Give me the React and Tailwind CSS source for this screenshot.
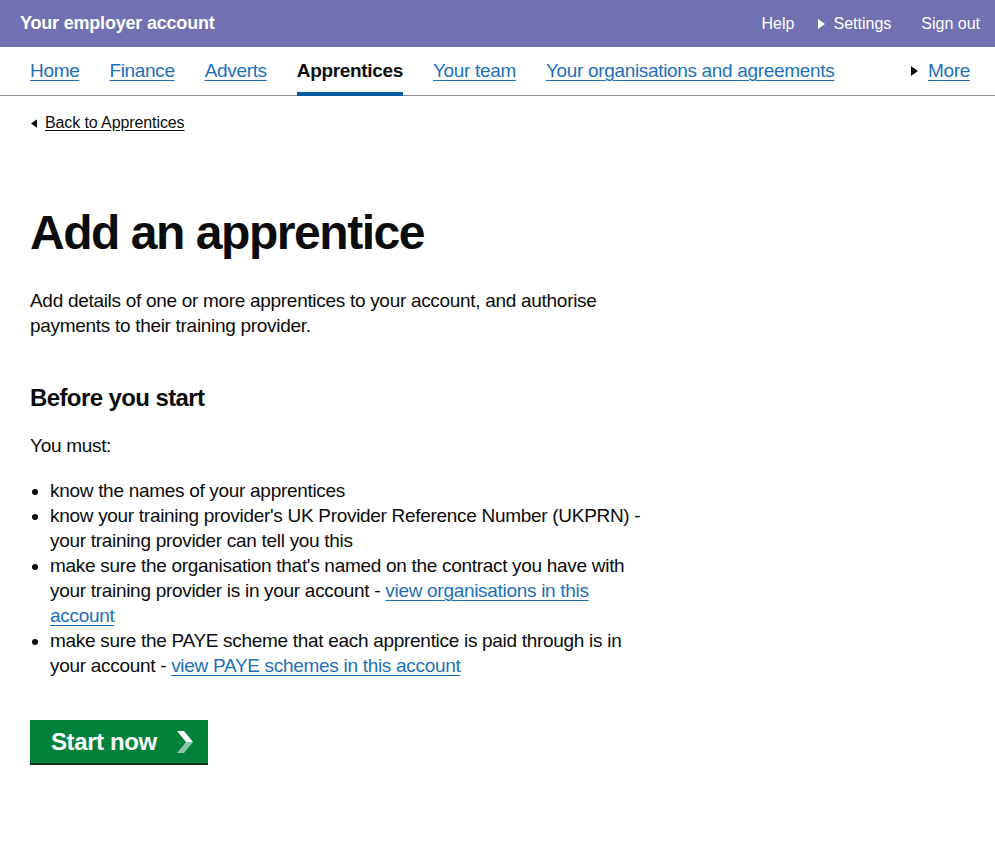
import { useState } from "react";

const FONT = { fontFamily: '"Liberation Sans", Arial, sans-serif' };

const NAV = [
  { label: "Home" },
  { label: "Finance" },
  { label: "Adverts" },
  { label: "Apprentices", current: true },
  { label: "Your team" },
  { label: "Your organisations and agreements" },
];

function Triangle({ dir = "right", className = "" }) {
  // small solid caret used by the settings / more / back links
  const d = dir === "left" ? "M7 0 L7 10 L0 5 Z" : "M0 0 L7 5 L0 10 Z";
  return (
    <svg viewBox="0 0 7 10" className={className} aria-hidden="true">
      <path d={d} fill="currentColor" />
    </svg>
  );
}

function Chevron() {
  return (
    <svg viewBox="0 0 16 22" className="w-[16px] h-[22px]" aria-hidden="true">
      <path d="M0 0 H7 L16 11 H9 Z" fill="#ffffff" />
      <path d="M9 11 H16 L7 22 H0 Z" fill="#ffffff" fillOpacity="0.55" />
    </svg>
  );
}

const link = "text-[#1d70b8] underline underline-offset-[3px] decoration-1";

export default function App() {
  const [active] = useState("Apprentices");

  return (
    <div className="min-h-[848px] bg-white text-[#0b0c0c]" style={FONT}>
      <header className="h-[47px] bg-[#7171b1] flex items-center justify-between pl-[20px] pr-[15px] text-white">
        <span className="font-bold text-[18px] tracking-[-0.2px]">Your employer account</span>
        <nav className="flex items-center text-[16px]">
          <a className="px-[12px]">Help</a>
          <a className="px-[12px] flex items-center gap-[8px]">
            <Triangle className="w-[7px] h-[10px]" />
            Settings
          </a>
          <a className="pl-[18px] pr-[0px]">Sign out</a>
        </nav>
      </header>

      <nav className="h-[49px] border-b border-[#8e8e8e] flex items-stretch justify-between pl-[30px] pr-[25px] text-[19px] tracking-[-0.33px]">
        <ul className="flex items-stretch gap-[30px]">
          {NAV.map((n) => (
            <li key={n.label} className="relative flex items-center">
              {n.label === active ? (
                <>
                  <span className="font-bold">{n.label}</span>
                  <span className="absolute left-0 right-0 bottom-[-1px] h-[4px] bg-[#005ea5]" />
                </>
              ) : (
                <a className={link}>{n.label}</a>
              )}
            </li>
          ))}
        </ul>
        <div className="flex items-center gap-[10px]">
          <Triangle className="w-[7px] h-[10px]" />
          <a className={link}>More</a>
        </div>
      </nav>

      <main className="px-[30px]">
        <a className="mt-[17px] flex items-center gap-[8px] text-[16px] leading-[20px] w-fit tracking-[-0.1px]">
          <Triangle dir="left" className="w-[6px] h-[9px] ml-[1px]" />
          <span className="underline underline-offset-[2px]">Back to Apprentices</span>
        </a>

        <h1 className="mt-[75px] text-[48px] leading-[50px] font-bold tracking-[-1.45px]">Add an apprentice</h1>

        <div className="text-[19px] leading-[25px] tracking-[-0.3px]">
          <p className="mt-[30px]">
            Add details of one or more apprentices to your account, and authorise
            <br />
            payments to their training provider.
          </p>

          <h2 className="mt-[45px] text-[24px] leading-[30px] font-bold tracking-[-0.6px]">Before you start</h2>

          <p className="mt-[20px]">You must:</p>

          <ul className="mt-[20px] list-disc pl-[20px]">
            <li>know the names of your apprentices</li>
            <li>
              know your training provider's UK Provider Reference Number (UKPRN) -
              <br />
              your training provider can tell you this
            </li>
            <li>
              make sure the organisation that's named on the contract you have with
              <br />
              your training provider is in your account - <a className={link}>view organisations in this</a>
              <br />
              <a className={link}>account</a>
            </li>
            <li>
              make sure the PAYE scheme that each apprentice is paid through is in
              <br />
              your account - <a className={link}>view PAYE schemes in this account</a>
            </li>
          </ul>
        </div>

        <button
          type="button"
          className="mt-[42px] h-[45px] w-[178px] bg-[#00823b] border-b-2 border-[#003618] flex items-center pl-[21px] gap-[20px] text-white text-[24px] font-bold tracking-[-0.4px]"
        >
          <span>Start now</span>
          <Chevron />
        </button>
      </main>
    </div>
  );
}
